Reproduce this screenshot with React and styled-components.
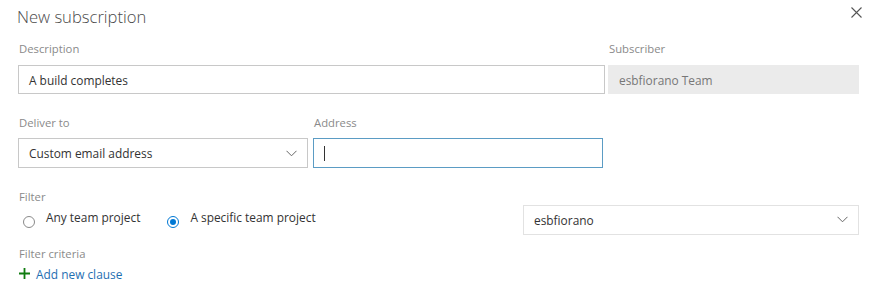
import React from 'react';
import styled, { createGlobalStyle } from 'styled-components';

const Global = createGlobalStyle`
  body {
    margin: 0;
    background: #fff;
    font-family: "Segoe UI", "Open Sans", "Noto Sans", sans-serif;
  }
`;

const Dialog = styled.div`
  width: 870px;
  height: 298px;
  box-sizing: border-box;
  padding: 0 11px 0 18px;
  background: #fff;
`;

const Header = styled.div`
  display: flex;
  justify-content: space-between;
  align-items: center;
  height: 32px;
  margin-left: -1px;
`;

const Title = styled.h1`
  margin: 0;
  font-size: 16.6px;
  font-weight: 300;
  color: #4a4a4a;
`;

const Close = styled.button`
  border: 0;
  background: none;
  padding: 0;
  margin-right: -4px;
  margin-top: -8px;
  width: 14px;
  height: 14px;
  display: flex;
  align-items: center;
  justify-content: center;
  cursor: pointer;
`;

const Row = styled.div`
  display: grid;
  grid-template-columns: ${p => p.cols};
  column-gap: ${p => p.gap || 3}px;
  margin-top: ${p => p.top}px;
`;

const Field = styled.div`
  display: flex;
  flex-direction: column;
`;

const Label = styled.div`
  font-size: 11.3px;
  line-height: 16px;
  color: #8a8a8a;
  margin-bottom: ${p => p.bottom ?? 8}px;
  padding-left: 1px;
`;

const Box = styled.div`
  box-sizing: border-box;
  height: ${p => p.h || 30}px;
  display: flex;
  align-items: center;
  justify-content: space-between;
  padding: 0 10px;
  font-size: 11.9px;
  color: #333;
  background: ${p => (p.disabled ? '#ebebeb' : '#fff')};
  border: 1px solid ${p => (p.disabled ? '#ebebeb' : p.focused ? '#5b9cc4' : p.light ? '#e2e2e2' : '#c8c8c8')};
  ${p => p.disabled && 'color: #777;'}
`;

const Caret = styled.span`
  width: 1px;
  height: 15px;
  background: #333;
`;

const RadioRow = styled.div`
  display: flex;
  align-items: center;
  height: 29px;
`;

const RadioGroup = styled.div`
  display: flex;
  align-items: flex-start;
  gap: 22px;
  width: 505px;
  padding-top: 4px;
  height: 100%;
  box-sizing: border-box;
`;

const RadioOption = styled.label`
  display: flex;
  align-items: flex-start;
  gap: 11px;
  font-size: 11.9px;
  color: #333;
  padding-left: 5px;
`;

const Dot = styled.span`
  box-sizing: border-box;
  width: 12px;
  height: 12px;
  border-radius: 50%;
  margin-top: 7px;
  border: 1px solid ${p => (p.checked ? '#0078d4' : '#8a8a8a')};
  display: flex;
  align-items: center;
  justify-content: center;
  &::after {
    content: '';
    width: 6px;
    height: 6px;
    border-radius: 50%;
    background: ${p => (p.checked ? '#0078d4' : 'transparent')};
  }
`;

const ProjectSelect = styled(Box)`
  flex: 1;
`;

const AddClause = styled.a`
  display: inline-flex;
  align-items: center;
  gap: 6px;
  margin-top: 3px;
  font-size: 11.9px;
  line-height: 16px;
  color: #1f6fb2;
  text-decoration: none;
  padding-left: 1px;
`;

const Chevron = () => (
  <svg width="11" height="7" viewBox="0 0 11 7">
    <path d="M0.5 0.8 L5.5 5.8 L10.5 0.8" fill="none" stroke="#666" strokeWidth="1" />
  </svg>
);

const CloseIcon = () => (
  <svg width="11" height="11" viewBox="0 0 11 11">
    <path d="M0.5 0.5 L10.5 10.5 M10.5 0.5 L0.5 10.5" stroke="#555" strokeWidth="1.1" />
  </svg>
);

const Plus = () => (
  <svg width="11" height="11" viewBox="0 0 11 11">
    <path d="M5.5 0 V11 M0 5.5 H11" stroke="#107c10" strokeWidth="1.8" />
  </svg>
);

export default function App() {
  return (
    <Dialog>
      <Global />
      <Header>
        <Title>New subscription</Title>
        <Close aria-label="Close"><CloseIcon /></Close>
      </Header>

      <Row cols="587px 1fr" top={9}>
        <Field>
          <Label>Description</Label>
          <Box h={29}>A build completes</Box>
        </Field>
        <Field>
          <Label>Subscriber</Label>
          <Box h={29} disabled>esbfiorano Team</Box>
        </Field>
      </Row>

      <Row cols="290px 290px" gap={5} top={21}>
        <Field>
          <Label bottom={7}>Deliver to</Label>
          <Box>
            Custom email address
            <Chevron />
          </Box>
        </Field>
        <Field>
          <Label bottom={7}>Address</Label>
          <Box focused>
            <Caret />
          </Box>
        </Field>
      </Row>

      <Row cols="1fr" top={21}>
        <Field>
          <Label bottom={0}>Filter</Label>
          <RadioRow>
            <RadioGroup>
              <RadioOption>
                <Dot />
                Any team project
              </RadioOption>
              <RadioOption>
                <Dot checked />
                A specific team project
              </RadioOption>
            </RadioGroup>
            <ProjectSelect light>
              esbfiorano
              <Chevron />
            </ProjectSelect>
          </RadioRow>
        </Field>
      </Row>

      <Row cols="1fr" top={12}>
        <Field>
          <Label bottom={0}>Filter criteria</Label>
          <div>
            <AddClause href="#">
              <Plus />
              Add new clause
            </AddClause>
          </div>
        </Field>
      </Row>
    </Dialog>
  );
}
